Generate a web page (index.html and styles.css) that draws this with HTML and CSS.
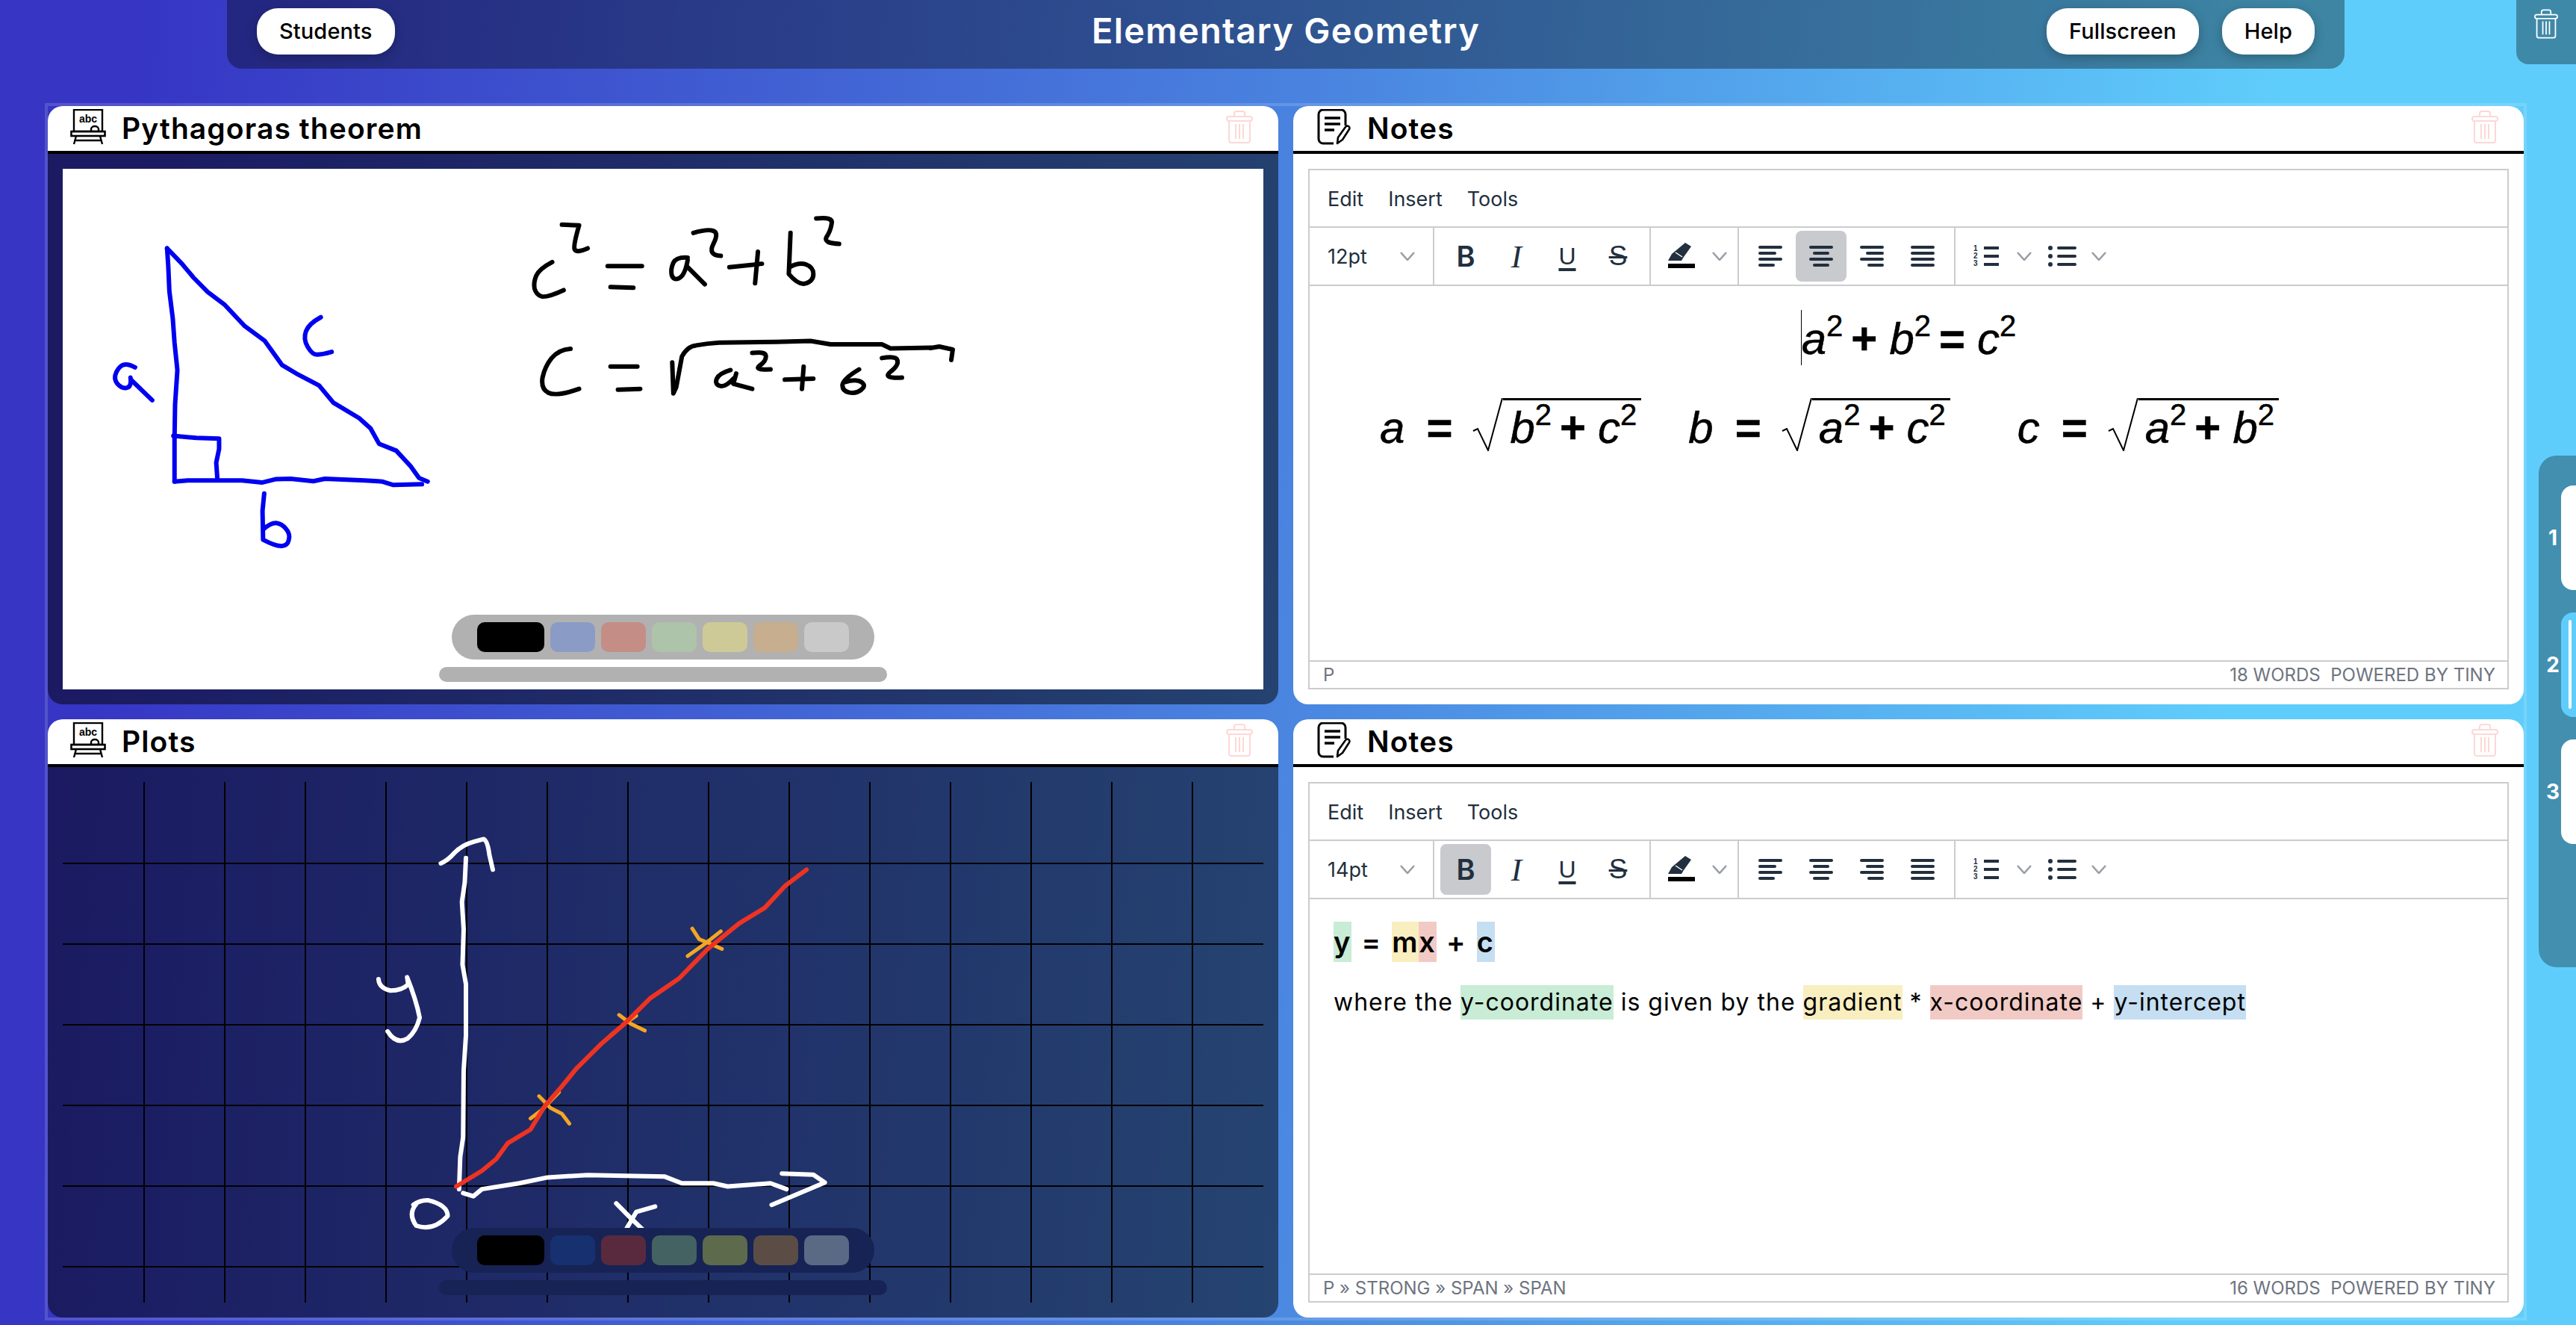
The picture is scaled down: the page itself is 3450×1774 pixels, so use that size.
FILE: index.html
```html
<!DOCTYPE html>
<html>
<head>
	<meta charset="utf-8">
	<title>Elementary Geometry</title>
	<link rel="stylesheet" href="styles.css">
</head>
<body>
	<svg class="defs" width="0" height="0">
		<symbol id="trash" viewBox="0 0 36 44">
			<path d="M11 8V4a3 3 0 0 1 3-3h8a3 3 0 0 1 3 3v4"/>
			<rect x="1" y="8" width="34" height="6" rx="3"/>
			<path d="M4 14v26a3 3 0 0 0 3 3h22a3 3 0 0 0 3-3V14"/>
			<path d="M13 18v20M18 18v20M23 18v20"/>
		</symbol>
		<symbol id="board" viewBox="0 0 48 48">
			<rect x="5" y="1" width="38" height="29" fill="none" stroke="#000" stroke-width="2.4"/>
			<path d="M28 30v-3a5 4 0 0 1 10 0v3" fill="none" stroke="#000" stroke-width="2.4"/>
			<rect x="1.5" y="30" width="45" height="6" fill="none" stroke="#000" stroke-width="2.6"/>
			<path d="M5 47l3-11M43 47l-3-11M7 42h34" fill="none" stroke="#000" stroke-width="2.4"/>
		</symbol>
		<symbol id="note" viewBox="0 0 46 48">
			<path d="M22 46H8a6 6 0 0 1-6-6V7a6 6 0 0 1 6-6h24a6 6 0 0 1 6 6v15" fill="none" stroke="#000" stroke-width="3"/>
			<path d="M10 12h21M10 20h21M10 28h13" fill="none" stroke="#000" stroke-width="3.4"/>
			<path d="M27 46l1-8 10-14a2.8 2.8 0 0 1 5 3L34 41z" fill="none" stroke="#000" stroke-width="2.6" stroke-linejoin="round"/>
		</symbol>
		<symbol id="chev" viewBox="0 0 20 12">
			<path d="M1 1l9 10 9-10" fill="none" stroke="#9a9ea6" stroke-width="2.6"/>
		</symbol>
		<symbol id="pen" viewBox="0 0 36 36">
			<path d="M0 24l5-9L23 0l8 5-10 14-3 5z" fill="#222f3e"/>
			<path d="M10 13l9 6" stroke="#fff" stroke-width="1.5"/>
			<rect y="28" width="36" height="6" fill="#000"/>
		</symbol>
		<symbol id="al-left" viewBox="0 0 32 28">
			<path d="M2 2h28M2 10h20M2 18h28M2 26h18"/>
		</symbol>
		<symbol id="al-center" viewBox="0 0 32 28">
			<path d="M2 2h28M7 10h18M2 18h28M7 26h18"/>
		</symbol>
		<symbol id="al-right" viewBox="0 0 32 28">
			<path d="M2 2h28M10 10h20M2 18h28M12 26h18"/>
		</symbol>
		<symbol id="al-just" viewBox="0 0 32 28">
			<path d="M2 2h28M2 10h28M2 18h28M2 26h28"/>
		</symbol>
		<symbol id="bullist" viewBox="0 0 40 28">
			<circle cx="4" cy="3" r="3" fill="#222f3e"/>
			<circle cx="4" cy="14" r="3" fill="#222f3e"/>
			<circle cx="4" cy="25" r="3" fill="#222f3e"/>
			<path d="M15 3h22M15 14h22M15 25h22" fill="none" stroke="#222f3e" stroke-width="4" stroke-linecap="round"/>
		</symbol>
		<symbol id="radical" viewBox="0 0 41 71">
			<path d="M1 44l6-3 14 29L40 0" fill="none" stroke="#000" stroke-width="2"/>
		</symbol>
	</svg>

	<header class="topbar">
		<div class="topbar-left"><button class="pill">Students</button></div>
		<h1 class="app-title">Elementary Geometry</h1>
		<div class="topbar-right">
			<button class="pill">Fullscreen</button>
			<button class="pill">Help</button>
		</div>
	</header>

	<div class="trash-tab"><svg class="trash trash-white"><use href="#trash"/></svg></div>

	<nav class="pages">
		<div class="page"><span class="page-num">1</span><span class="page-btn"></span></div>
		<div class="page"><span class="page-num">2</span><span class="page-btn on"></span></div>
		<div class="page"><span class="page-num">3</span><span class="page-btn"></span></div>
	</nav>

	<main class="workspace">
		<!-- whiteboard -->
		<section class="panel">
			<div class="panel-head">
				<svg class="head-icon" viewBox="0 0 48 48"><use href="#board"/><text x="24" y="18" text-anchor="middle" class="board-abc">abc</text></svg>
				<h2 class="panel-title">Pythagoras theorem</h2>
				<svg class="trash"><use href="#trash"/></svg>
			</div>
			<div class="panel-body dark">
				<div class="canvas white">
					<svg class="ink" viewBox="84 226 1608 697">
						<g transform="translate(60 220) scale(.7653 .4591)" class="ink-blue">
							<polyline points="214,245 240,290 260,330 285,372 315,410 350,472 385,515 415,585 440,610 480,645 505,695 550,740 570,770 585,815 615,835 640,880 655,915 670,925"/>
							<polyline points="214,245 216,295 218,370 224,450 227,520 232,600 228,700 227,800 227,925"/>
							<polyline points="227,925 250,922 345,922 380,928 405,918 430,917 470,924 490,917 560,922 590,925 610,935 660,933"/>
							<polyline points="225,792 265,798 305,800 305,830 300,870 302,918"/>
							<path d="M158 592Q145 580 137 585Q130 590 125 607Q120 625 127 640Q135 655 143 652Q152 650 150 622"/>
							<path d="M152 630L188 688"/>
							<path d="M483 446Q462 465 457 487Q452 510 460 532Q468 555 476 555Q485 555 502 547"/>
							<path d="M384 960L381 1010L382 1095Q405 1115 415 1113Q425 1112 427 1095Q430 1078 422 1063Q415 1048 405 1046Q395 1045 382 1065"/>
						</g>
						<g transform="translate(60 220) scale(.7653 .4591)" class="ink-black">
							<path d="M888 285Q865 305 860 325Q855 345 857 362Q860 380 869 385Q878 390 908 367"/>
							<path d="M905 176L935 178Q925 235 927 247Q930 260 950 245"/>
							<path d="M985 297H1045"/>
							<path d="M990 358L1030 360"/>
							<path d="M1125 272Q1105 270 1100 287Q1095 305 1097 322Q1100 340 1110 332Q1120 325 1125 280"/>
							<path d="M1125 300L1155 350"/>
							<path d="M1135 200Q1160 188 1170 194Q1180 200 1170 232Q1160 265 1183 267"/>
							<path d="M1198 300L1255 290"/>
							<path d="M1248 255L1243 347"/>
							<path d="M1305 200L1302 320Q1320 355 1332 347Q1345 340 1345 320Q1345 300 1332 292Q1320 285 1303 300"/>
							<path d="M1350 158Q1380 152 1377 173Q1375 195 1368 212Q1362 230 1390 232"/>
							<path d="M920 538Q900 540 887 565Q875 590 871 622Q868 655 881 666Q895 678 935 655"/>
							<path d="M990 590H1037"/>
							<path d="M1003 657L1042 655"/>
							<path d="M1098 578L1100 668L1105 650L1115 560Q1125 530 1140 528Q1160 522 1180 520L1280 518L1340 515L1375 525L1465 525L1480 537L1550 535"/>
							<path d="M1200 600Q1180 610 1176 625Q1172 640 1181 646Q1190 652 1205 625"/>
							<path d="M1210 610L1205 640L1238 655"/>
							<path d="M1238 550Q1262 545 1262 560Q1262 575 1251 587Q1240 600 1270 598"/>
							<path d="M1295 628L1345 625"/>
							<path d="M1328 590L1325 655"/>
							<path d="M1425 598Q1398 625 1396 642Q1395 660 1407 665Q1420 670 1429 657Q1438 645 1429 635Q1420 625 1400 635"/>
							<path d="M1465 565Q1490 558 1492 571Q1495 585 1480 605Q1465 625 1500 622"/>
						</g>
						<polyline class="ink-black-line" points="1246,466 1258,464 1276,468 1274,482"/>
					</svg>
					<div class="palette">
						<span class="swatch wide black"></span>
						<span class="swatch c1"></span>
						<span class="swatch c2"></span>
						<span class="swatch c3"></span>
						<span class="swatch c4"></span>
						<span class="swatch c5"></span>
						<span class="swatch c6"></span>
					</div>
					<div class="slider"></div>
				</div>
			</div>
		</section>

		<!-- notes 1 -->
		<section class="panel">
			<div class="panel-head head-notes">
				<svg class="head-icon"><use href="#note"/></svg>
				<h2 class="panel-title">Notes</h2>
				<svg class="trash"><use href="#trash"/></svg>
			</div>
			<div class="panel-body">
				<div class="editor">
					<div class="menubar"><span>Edit</span><span>Insert</span><span>Tools</span></div>
					<div class="toolbar">
						<div class="tg tg-size"><span class="size-label">12pt</span><svg class="chev"><use href="#chev"/></svg></div>
						<div class="tg tg-btns">
							<span class="tbtn"><b class="ic-b">B</b></span>
							<span class="tbtn"><i class="ic-i">I</i></span>
							<span class="tbtn"><u class="ic-u">U</u></span>
							<span class="tbtn"><s class="ic-s">S</s></span>
						</div>
						<div class="tg tg-color"><svg class="pen"><use href="#pen"/></svg><svg class="chev"><use href="#chev"/></svg></div>
						<div class="tg tg-btns">
							<span class="tbtn"><svg class="ic-al"><use href="#al-left"/></svg></span>
							<span class="tbtn on"><svg class="ic-al"><use href="#al-center"/></svg></span>
							<span class="tbtn"><svg class="ic-al"><use href="#al-right"/></svg></span>
							<span class="tbtn"><svg class="ic-al"><use href="#al-just"/></svg></span>
						</div>
						<div class="tg tg-lists">
							<span class="ic-num"><span class="list-digits"><span>1</span><span>2</span><span>3</span></span><span class="list-bars"></span></span><svg class="chev"><use href="#chev"/></svg>
							<svg class="ic-bul"><use href="#bullist"/></svg><svg class="chev"><use href="#chev"/></svg>
						</div>
					</div>
					<div class="content math">
						<div class="eq-top"><span class="eq-caret"><i>a</i><sup>2</sup><b class="op">+</b><i>b</i><sup>2</sup><b class="op">=</b><i>c</i><sup>2</sup></span></div>
						<div class="eq-row">
							<div class="formula">
								<i>a</i><b class="rel">=</b>
								<span class="root"><svg class="radical"><use href="#radical"/></svg><span class="radicand"><i>b</i><sup>2</sup><b class="op">+</b><i>c</i><sup>2</sup></span></span>
							</div>
							<div class="formula">
								<i>b</i><b class="rel">=</b>
								<span class="root"><svg class="radical"><use href="#radical"/></svg><span class="radicand"><i>a</i><sup>2</sup><b class="op">+</b><i>c</i><sup>2</sup></span></span>
							</div>
							<div class="formula">
								<i>c</i><b class="rel">=</b>
								<span class="root"><svg class="radical"><use href="#radical"/></svg><span class="radicand"><i>a</i><sup>2</sup><b class="op">+</b><i>b</i><sup>2</sup></span></span>
							</div>
						</div>
					</div>
					<div class="statusbar"><span>P</span><span>18 words&nbsp; Powered by Tiny</span></div>
				</div>
			</div>
		</section>

		<!-- graph board -->
		<section class="panel">
			<div class="panel-head">
				<svg class="head-icon" viewBox="0 0 48 48"><use href="#board"/><text x="24" y="18" text-anchor="middle" class="board-abc">abc</text></svg>
				<h2 class="panel-title">Plots</h2>
				<svg class="trash"><use href="#trash"/></svg>
			</div>
			<div class="panel-body dark">
				<div class="canvas grid">
					<svg class="ink" viewBox="84 1047 1608 697">
						<g transform="translate(60 950) scale(.7653 .5255)" class="ink-white">
							<polyline points="737,378 735,440 730,490 733,560 731,650 737,700 737,830 733,920 732,1090 727,1140 725,1222"/>
							<path d="M693 392Q705 385 717 365Q730 345 750 337L768 330Q775 335 778 370L784 408"/>
							<path d="M584 687Q585 710 605 716Q625 716 636 700L634 682Q650 740 656 785Q650 820 635 838Q615 855 600 820"/>
							<path d="M650 1260Q635 1285 650 1315Q680 1330 705 1290Q705 1262 670 1250Q655 1250 645 1262"/>
							<polyline points="732,1232 750,1240 765,1222 830,1207 880,1192 950,1186 1015,1188 1085,1190 1115,1207 1170,1207 1195,1215 1270,1207 1298,1222"/>
							<polyline points="1290,1182 1345,1185 1365,1205 1300,1245 1272,1262"/>
							<polyline points="1000,1258 1025,1295 1050,1330"/>
							<polyline points="1068,1266 1035,1280 1015,1330"/>
						</g>
						<g transform="translate(60 950) scale(.7653 .5255)" class="ink-orange">
							<polyline points="865,985 885,1015 905,1030 918,1055"/>
							<polyline points="900,975 870,1020 850,1042"/>
							<polyline points="1005,778 1025,800 1050,818"/>
							<polyline points="1035,780 1015,800 990,830"/>
							<polyline points="1133,558 1145,585 1165,597 1185,610"/>
							<polyline points="1183,565 1155,597 1125,628"/>
						</g>
						<g transform="translate(60 950) scale(.7653 .5255)" class="ink-red">
							<polyline points="720,1215 765,1175 790,1145 810,1105 850,1070 875,1010 905,960 930,915 975,850 1015,800 1060,735 1110,685 1160,610 1215,545 1260,505 1295,450 1333,408"/>
						</g>
					</svg>
					<div class="palette">
						<span class="swatch wide black"></span>
						<span class="swatch c1"></span>
						<span class="swatch c2"></span>
						<span class="swatch c3"></span>
						<span class="swatch c4"></span>
						<span class="swatch c5"></span>
						<span class="swatch c6"></span>
					</div>
					<div class="slider"></div>
				</div>
			</div>
		</section>

		<!-- notes 2 -->
		<section class="panel">
			<div class="panel-head head-notes">
				<svg class="head-icon"><use href="#note"/></svg>
				<h2 class="panel-title">Notes</h2>
				<svg class="trash"><use href="#trash"/></svg>
			</div>
			<div class="panel-body">
				<div class="editor">
					<div class="menubar"><span>Edit</span><span>Insert</span><span>Tools</span></div>
					<div class="toolbar">
						<div class="tg tg-size"><span class="size-label">14pt</span><svg class="chev"><use href="#chev"/></svg></div>
						<div class="tg tg-btns">
							<span class="tbtn on"><b class="ic-b">B</b></span>
							<span class="tbtn"><i class="ic-i">I</i></span>
							<span class="tbtn"><u class="ic-u">U</u></span>
							<span class="tbtn"><s class="ic-s">S</s></span>
						</div>
						<div class="tg tg-color"><svg class="pen"><use href="#pen"/></svg><svg class="chev"><use href="#chev"/></svg></div>
						<div class="tg tg-btns">
							<span class="tbtn"><svg class="ic-al"><use href="#al-left"/></svg></span>
							<span class="tbtn"><svg class="ic-al"><use href="#al-center"/></svg></span>
							<span class="tbtn"><svg class="ic-al"><use href="#al-right"/></svg></span>
							<span class="tbtn"><svg class="ic-al"><use href="#al-just"/></svg></span>
						</div>
						<div class="tg tg-lists">
							<span class="ic-num"><span class="list-digits"><span>1</span><span>2</span><span>3</span></span><span class="list-bars"></span></span><svg class="chev"><use href="#chev"/></svg>
							<svg class="ic-bul"><use href="#bullist"/></svg><svg class="chev"><use href="#chev"/></svg>
						</div>
					</div>
					<div class="content text">
						<p class="line-big"><span class="hl green">y</span> = <span class="hl yellow">m</span><span class="hl red">x</span> + <span class="hl blue">c</span></p>
						<p class="line-small">where the <span class="hl green">y-coordinate</span> is given by the <span class="hl yellow">gradient</span> * <span class="hl red">x-coordinate</span> + <span class="hl blue">y-intercept</span></p>
					</div>
					<div class="statusbar"><span>P » strong » span » span</span><span>16 words&nbsp; Powered by Tiny</span></div>
				</div>
			</div>
		</section>
	</main>
</body>
</html>
```

FILE: styles.css
```css
* {
	margin: 0;
	padding: 0;
	box-sizing: border-box;
}

html, body {
	height: 1774px;
	overflow: hidden;
}

body {
	position: relative;
	font-family: Inter, "Liberation Sans", sans-serif;
	background: linear-gradient(95deg, #3635c4 5%, #4a85e0 50%, #5fcdfb 85%);
}

.defs {
	position: absolute;
}

/* top bar */
.topbar {
	display: grid;
	grid-template-columns: 1fr auto 1fr;
	align-items: center;
	width: 2836px;
	height: 92px;
	margin-left: 304px;
	padding: 0 40px 8px;
	background: rgba(0, 0, 0, .35);
	border-radius: 0 0 20px 20px;
}

.topbar-right {
	display: flex;
	justify-content: flex-end;
	gap: 31px;
}

.pill {
	height: 62px;
	padding: 0 30px 2px;
	border: 0;
	border-radius: 28px;
	background: #fff;
	color: #000;
	font-family: inherit;
	font-size: 29px;
	font-weight: 500;
	letter-spacing: .1px;
	box-shadow: 0 4px 14px rgba(0, 0, 0, .25);
}

.app-title {
	margin-top: -3px;
	color: #fff;
	font-size: 47px;
	font-weight: 600;
	letter-spacing: 1.3px;
}

.trash-tab {
	position: absolute;
	top: 0;
	right: 0;
	width: 80px;
	height: 86px;
	padding: 12px 0 0 24px;
	background: rgba(0, 0, 0, .33);
	border-radius: 0 0 0 16px;
}

.trash {
	width: 36px;
	height: 44px;
	fill: none;
	stroke: #fdd8d6;
	stroke-width: 2;
}

.trash-white {
	display: block;
	width: 32px;
	height: 40px;
	stroke: #fff;
}

/* page tabs on the right */
.pages {
	position: absolute;
	top: 610px;
	right: 0;
	width: 50px;
	height: 685px;
	padding-top: 40px;
	background: rgba(0, 0, 0, .3);
	border-radius: 24px 0 0 24px;
	overflow: hidden;
}

.page {
	display: flex;
	align-items: center;
	height: 140px;
	margin-bottom: 30px;
}

.page-num {
	flex: none;
	width: 30px;
	padding-left: 8px;
	color: #fff;
	font-size: 28px;
	font-weight: 700;
	text-align: center;
}

.page-btn {
	width: 36px;
	height: 140px;
	flex: none;
	background: #fff;
	border-radius: 16px;
}

.page-btn.on {
	background: #5fcdfb;
	position: relative;
}

.page-btn.on::after {
	content: "";
	position: absolute;
	top: 10px;
	left: 10px;
	width: 4px;
	height: 119px;
	background: #fff;
	border-radius: 2px;
}

/* panels */
.workspace {
	display: grid;
	grid-template-columns: 1648px 1648px;
	grid-template-rows: 801px 801px;
	gap: 20px;
	width: 3324px;
	margin: 46px 0 0 60px;
	border: 4px solid rgba(255, 255, 255, .15);
}

.panel {
	display: flex;
	flex-direction: column;
	border-radius: 20px;
	overflow: hidden;
}

.panel-head {
	display: flex;
	align-items: center;
	flex: none;
	height: 64px;
	padding: 0 34px 4px 30px;
	background: #fff;
	border-bottom: 4px solid #000;
}

.head-icon {
	width: 48px;
	height: 48px;
	margin-right: 21px;
}

.head-notes {
	padding-left: 32px;
}

.head-notes .head-icon {
	width: 46px;
	margin-right: 21px;
}

.board-abc {
	font: 700 14px "Liberation Sans", sans-serif;
}

.panel-title {
	flex: 1;
	margin-top: 2px;
	font-size: 39px;
	font-weight: 600;
	letter-spacing: 1.1px;
	color: #000;
}

.panel-body {
	flex: 1;
	min-height: 0;
	padding: 20px;
	background: #fff;
}

.panel-body.dark {
	background: rgba(0, 0, 0, .5);
}

/* drawing canvas */
.canvas {
	position: relative;
	height: 100%;
}

.canvas.white {
	background: #fff;
}

.canvas.grid::before,
.canvas.grid::after {
	content: "";
	position: absolute;
	right: 0;
	bottom: 0;
}

.canvas.grid::before {
	top: 108px;
	left: 0;
	background: linear-gradient(#000 2px, transparent 2px) 0 0 / 100% 108px;
}

.canvas.grid::after {
	top: 0;
	left: 108px;
	background: linear-gradient(90deg, #000 2px, transparent 2px) 0 0 / 108px 100%;
}

.ink {
	position: absolute;
	top: 0;
	left: 0;
	z-index: 1;
	width: 100%;
	height: 100%;
}

.ink polyline, .ink path {
	fill: none;
	stroke-linecap: round;
	stroke-linejoin: round;
	vector-effect: non-scaling-stroke;
}

.ink-blue polyline, .ink-blue path { stroke: #0000f0; stroke-width: 6; }
.ink-black path, .ink-black-line { stroke: #000; stroke-width: 6; fill: none; }
.ink-white polyline, .ink-white path { stroke: #fff; stroke-width: 6; }
.ink-orange polyline { stroke: #f5a623; stroke-width: 5; }
.ink-red polyline { stroke: #ee3322; stroke-width: 6; }

.palette {
	position: absolute;
	left: 521px;
	bottom: 40px;
	z-index: 2;
	display: flex;
	align-items: center;
	gap: 8px;
	width: 566px;
	height: 60px;
	padding: 0 34px;
	background: #b1b1b1;
	border-radius: 30px;
}

.slider {
	position: absolute;
	left: 504px;
	bottom: 10px;
	z-index: 2;
	width: 600px;
	height: 20px;
	background: #b1b1b1;
	border-radius: 10px;
}

.grid .palette, .grid .slider {
	background: #162354;
}

.swatch {
	width: 60px;
	height: 40px;
	border-radius: 10px;
}

.swatch.wide { width: 90px; }
.swatch.black { background: #000; }
.swatch.c1 { background: #8a9bc5; }
.swatch.c2 { background: #c48e87; }
.swatch.c3 { background: #aec4aa; }
.swatch.c4 { background: #cdca98; }
.swatch.c5 { background: #c6ae8e; }
.swatch.c6 { background: #c9c9c9; }
.grid .swatch.c1 { background: #17306f; }
.grid .swatch.c2 { background: #592a3d; }
.grid .swatch.c3 { background: #446261; }
.grid .swatch.c4 { background: #5d6a4b; }
.grid .swatch.c5 { background: #5b4d45; }
.grid .swatch.c6 { background: #5a6a85; }

/* text editor */
.editor {
	display: flex;
	flex-direction: column;
	height: 100%;
	border: 2px solid #ccc;
	color: #222f3e;
}

.menubar {
	display: flex;
	align-items: center;
	flex: none;
	gap: 33px;
	height: 77px;
	padding: 2px 0 0 24px;
	border-bottom: 2px solid #ccc;
	font-size: 27px;
}

.toolbar {
	display: flex;
	flex: none;
	height: 78px;
	border-bottom: 2px solid #ccc;
}

.tg {
	display: flex;
	align-items: center;
	border-right: 2px solid #ccc;
}

.tg-size {
	width: 167px;
	padding-left: 24px;
	font-size: 27px;
}

.size-label {
	width: 97px;
}

.tg-btns {
	width: 290px;
	padding: 0 8px;
}

.tg-color {
	width: 118px;
	padding-left: 23px;
}

.tg-lists {
	padding-left: 24px;
	border-right: 0;
}

.tbtn {
	display: flex;
	align-items: center;
	justify-content: center;
	width: 68px;
	height: 68px;
	border-radius: 8px;
	font-family: "Liberation Sans", sans-serif;
	font-size: 39px;
}

.tbtn.on {
	background: #c8cacd;
}

.ic-b {
	font-family: Inter, sans-serif;
	font-size: 38px;
	font-weight: 600;
}

.ic-i {
	font-family: "Liberation Serif", serif;
	font-size: 43px;
}

.ic-u {
	font-size: 32px;
	text-underline-offset: 5px;
	text-decoration-thickness: 4px;
}

.ic-s {
	font-size: 37px;
	text-decoration-thickness: 3px;
	padding: 0 6px;
}

.chev {
	width: 20px;
	height: 12px;
	flex: none;
}

.pen {
	width: 36px;
	height: 36px;
	margin-right: 23px;
}

.ic-al {
	width: 32px;
	height: 28px;
	fill: none;
	stroke: #222f3e;
	stroke-width: 4;
	stroke-linecap: round;
}

.ic-num {
	display: flex;
	width: 36px;
	height: 30px;
	margin-right: 22px;
}

.list-digits {
	display: flex;
	flex-direction: column;
	justify-content: space-between;
	width: 14px;
	font: 700 10px/10px "Liberation Sans", sans-serif;
}

.list-bars {
	width: 20px;
	height: 30px;
	background: linear-gradient(#222f3e 4px, transparent 4px) 0 2px / 100% 11px repeat-y;
	border-radius: 2px;
}

.ic-bul {
	width: 40px;
	height: 28px;
	margin: 0 19px 0 21px;
}

.content {
	flex: 1;
	min-height: 0;
	background: #fff;
	color: #000;
}

/* equations */
.math {
	padding: 32px 0 0 94px;
	font-family: "Liberation Sans", sans-serif;
	font-size: 60px;
	line-height: 71px;
	-webkit-text-stroke: .5px #000;
}

.math sup {
	font-size: 40px;
	line-height: 0;
	vertical-align: 24px;
}

.eq-top {
	margin-left: -94px;
	height: 74px;
	text-align: center;
}

.eq-caret {
	display: inline-block;
	height: 74px;
	padding-top: 3px;
	border-left: 1px solid #000;
}

.op {
	margin: 0 16px 0 11px;
}

.eq-row {
	display: flex;
	margin-top: 44px;
}

.formula {
	display: flex;
	align-items: flex-start;
	height: 71px;
	margin-right: 63px;
	padding-top: 4px;
}

.formula:nth-child(2) {
	margin-right: 90px;
}

.rel {
	margin: 0 27px 0 29px;
}

.root {
	display: flex;
	margin-top: -4px;
}

.radical {
	width: 41px;
	height: 71px;
	flex: none;
}

.radicand {
	height: 71px;
	padding: 1px 6px 0 9px;
	border-top: 3px solid #000;
	white-space: nowrap;
}

/* second notes page */
.text {
	padding: 30px 0 0 32px;
}

.hl {
	display: inline-block;
}

.green { background: #c8ecd5; }
.yellow { background: #f9eebf; }
.red { background: #f2cac5; }
.blue { background: #c5def2; }

.line-big {
	font-size: 38px;
	font-weight: 600;
	line-height: 54px;
	letter-spacing: 1.8px;
	word-spacing: 2px;
}

.line-small {
	margin-top: 31px;
	font-size: 32px;
	line-height: 46px;
	letter-spacing: 1px;
}

.statusbar {
	display: flex;
	align-items: center;
	justify-content: space-between;
	flex: none;
	height: 37px;
	padding: 0 16px 0 18px;
	border-top: 2px solid #ccc;
	color: #6e7480;
	font-size: 24px;
	text-transform: uppercase;
}
```
